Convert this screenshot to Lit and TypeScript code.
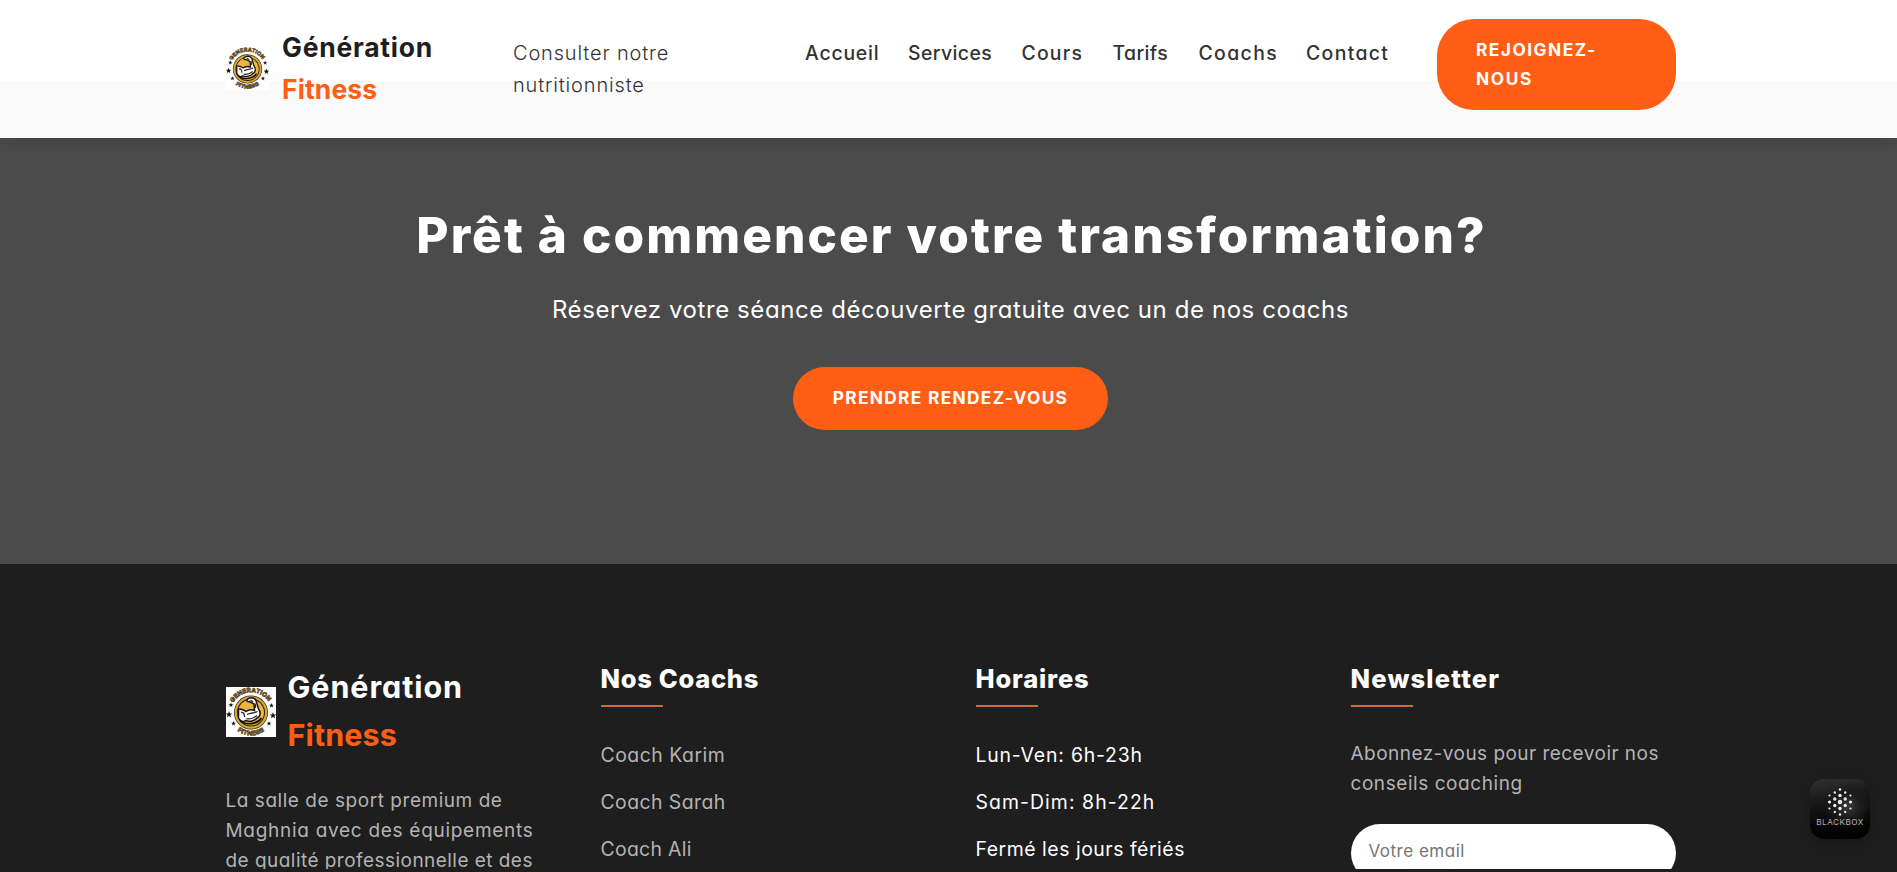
import { LitElement, html, css, svg } from "lit";

type Label = [text: string, spacing: number];

const NAV: Label[] = [["Accueil", 0.8], ["Services", 0.42], ["Cours", 1.2], ["Tarifs", 0.4], ["Coachs", 1.38], ["Contact", 1.35]];
const ABOUT: Label[] = [["La salle de sport premium de", 0.54], ["Maghnia avec des équipements", 0.71], ["de qualité professionnelle et des", 0.46]];
const COACHES: Label[] = [["Coach Karim", 0.52], ["Coach Sarah", 0.45], ["Coach Ali", 0.3]];
const HOURS: Label[] = [["Lun-Ven: 6h-23h", 0.82], ["Sam-Dim: 8h-22h", 1.07], ["Fermé les jours fériés", 0.54]];
const NEWS: Label[] = [["Abonnez-vous pour recevoir nos", 0.46], ["conseils coaching", 0.56]];

const STAR = "M0-3.4L1-1.1L3.4-1L1.5.5L2.1 2.9L0 1.5L-2.1 2.9L-1.5.5L-3.4-1L-1-1.1Z";
const STARS = [[5, 18, 0.7], [3, 27.5, 0.95], [7.5, 36.5, 0.7], [45.5, 18.5, 0.7], [47, 28.5, 0.95], [43, 36.5, 0.7]];

const line = ([text, spacing]: Label) =>
  html`<span class="line" style="letter-spacing:${spacing}px">${text}</span>`;

class GymLogo extends LitElement {
  static styles = css`
    :host { display: block; flex: none; }
    svg { display: block; width: 100%; height: 100%; }
    .arc { font: 800 6.2px Inter, sans-serif; fill: #b98526; stroke: #2a2010; stroke-width: 0.5px; }
  `;
  render() {
    return html`<svg viewBox="0 0 50 50">
      <rect width="50" height="50" fill="#fff" />
      <defs>
        <path id="top" d="M7.200 15.800A20.300 20.300 0 0 1 42.800 15.800" />
        <path id="low" d="M10.5 43.200A23 23 0 0 0 39.500 43.200" />
      </defs>
      <circle cx="25" cy="25.500" r="17" fill="#3a2a12" />
      <circle cx="25" cy="25.500" r="16.300" fill="#dca43a" />
      <circle cx="25" cy="25.500" r="14" fill="#2a1f12" />
      <circle cx="25" cy="25.500" r="13" fill="#eab541" />
      <path d="M12.5 22C16 21.5 18.500 23.5 20 24.500C23 22 27 22.500 28.500 23.500L28 17L23.500 14.500C20.500 15.500 20 12.500 22.500 11.500C25 10 29 11 30 13.500L32.500 22C35 25 34.500 30 31 31C29 34 23 35 19.500 33.500C17.500 35.500 14 34 12.500 31Z" fill="#fff" stroke="#171310" stroke-width="1.5" />
      <path d="M15 25.500C17.500 25 18.500 26.500 18.500 30M21 27.500C25 25.500 28 26.500 31.500 24.500M20.500 31.500C24 32.500 28 31 31 28.500M24.500 13L27 15M29.500 16.500V21" fill="none" stroke="#2c2c2e" stroke-width="1.3" />
      <path d="M14 33.500C18 38 31 38 35.500 31" fill="none" stroke="#171310" stroke-width="1.8" />
      ${STARS.map(([x, y, s]) => svg`<path d=${STAR} fill="#15151a" transform="translate(${x} ${y}) scale(${s})" />`)}
      <text class="arc"><textPath href="#top" textLength="42" lengthAdjust="spacingAndGlyphs">GENERATION</textPath></text>
      <text class="arc"><textPath href="#low" startOffset="1" textLength="29" lengthAdjust="spacingAndGlyphs">FITNESS</textPath></text>
    </svg>`;
  }
}
customElements.define("gym-logo", GymLogo);

/** Hexagonal cloud of dots, brighter and larger toward the centre column. */
const DOTS: number[][] = [];
[[0, [10.5, 16.5, 23, 29.5, 35.5]], [5.2, [13.5, 20, 26.5, 33]], [10.5, [16.5, 23, 29.5]]].forEach(([dx, ys]: any) =>
  ys.forEach((y: number) => {
    const r = Math.max(0.95, 2.2 - Math.abs(y - 23) * 0.075 - dx * 0.06);
    DOTS.push([30 + dx, y, r]);
    if (dx) DOTS.push([30 - dx, y, r]);
  })
);

class BlackboxBadge extends LitElement {
  static styles = css`
    :host {
      display: flex; flex-direction: column; align-items: center; width: 60px; height: 60px; overflow: hidden;
      border-radius: 14px; background: radial-gradient(ellipse at 62% 45%, #3a3a3a 0, #1c1c1c 26%, transparent 48%), linear-gradient(168deg, #333 0, #1a1a1a 32%, #070707 65%, #020202 100%);
      box-shadow: 0 3px 10px rgba(0, 0, 0, 0.25);
    }
    svg { display: block; width: 60px; height: 38px; flex: none; }
    .name { font: 400 8.2px/11px Inter, sans-serif; letter-spacing: 0.45px; color: #b0b0b0; }
  `;
  render() {
    return html`<svg viewBox="0 0 60 38">
        ${DOTS.map(([x, y, r]) => svg`<circle cx=${x} cy=${y} r=${r} fill="#eee" />`)}
      </svg><span class="name">BLACKBOX</span>`;
  }
}
customElements.define("blackbox-badge", BlackboxBadge);

class AppRoot extends LitElement {
  static styles = css`
    :host {
      display: flex; flex-direction: column; position: relative; height: 872px; overflow: hidden;
      background: #1e1e1e; color: #fff; font-family: Inter, sans-serif; font-feature-settings: "cv11";
    }
    h2, h3, p { margin: 0; }
    .line { display: block; white-space: nowrap; }
    .orange { color: #ff5e14; }

    .header {
      display: grid; grid-template-columns: 44px 231px 291px 645px 239px; flex: none; align-items: start;
      height: 138px; box-sizing: border-box; padding-left: 226px; position: relative; color: #333;
      background: linear-gradient(#fff 0 81px, #fafafa 81px); box-shadow: 0 3px 14px rgba(0, 0, 0, 0.12);
    }
    .header gym-logo { width: 43px; height: 43px; margin-top: 47px; }
    .brand { padding: 26px 0 0 12px; font: 700 26.5px/42px Inter, sans-serif; color: #1e1e1e; }
    .consult { padding: 37px 0 0 12px; font-size: 20px; line-height: 32px; font-weight: 300; letter-spacing: 0.84px; }
    .nav { display: grid; grid-template-columns: 103px 113.5px 91px 86px 107.5px auto; padding: 37px 0 0 13px; font-size: 19.4px; font-weight: 500; line-height: 32px; }
    .cta { border-radius: 37px; background: #ff5e14; color: #fff; font-weight: 700; font-size: 17.3px; }
    .join { box-sizing: border-box; height: 91px; margin-top: 19px; padding: 16px 0 0 39px; line-height: 29px; }

    .hero { display: flex; flex-direction: column; align-items: center; flex: none; height: 426px; box-sizing: border-box; padding: 67px 0 0 4px; background: #4b4b4b; }
    .hero h2, .footer h3 { font-feature-settings: normal; font-optical-sizing: none; font-weight: 800; }
    .hero h2 { font-size: 49.5px; line-height: 60px; letter-spacing: 2.08px; margin-right: -2.08px; white-space: nowrap; }
    .hero p { margin-top: 25.500px; font-size: 24px; line-height: 38px; letter-spacing: 0.58px; white-space: nowrap; }
    .book { margin-top: 38.500px; width: 315px; height: 63px; border-radius: 32px; line-height: 62px; text-align: center; letter-spacing: 1.33px; }

    .footer { display: grid; grid-template-columns: repeat(4, 325px); column-gap: 50px; flex: 1; min-height: 0; padding: 99px 0 0 225.5px; align-items: start; }
    .flogo { display: flex; align-items: center; gap: 12px; font-size: 30.5px; font-weight: 700; line-height: 48px; }
    .flogo gym-logo { width: 50px; height: 50px; margin-top: 2px; }
    .about { margin-top: 27px; font-size: 19px; line-height: 30px; color: #b3b3b3; }
    .footer h3 { font-size: 25.5px; line-height: 30px; padding: 1px 0 11px; }
    .rule { width: 62px; height: 2px; background: #cc6b42; }
    .list { padding-top: 24.500px; font-size: 19.4px; line-height: 47px; }
    .muted { color: #b3b3b3; }
    .news { padding-top: 32px; font-size: 19px; line-height: 30px; color: #b3b3b3; }
    .email { margin-top: 25px; box-sizing: border-box; width: 325px; height: 58px; border-radius: 29px; background: #fff; padding-left: 18px; color: #757575; font-size: 17px; line-height: 54px; letter-spacing: 0.5px; }

    .edge { position: absolute; left: 0; right: 0; bottom: 0; height: 3px; background: linear-gradient(90deg, #1f1d1d 0 18%, #281c1a 40% 58%, #1f1d1d 88%); }
    blackbox-badge { position: absolute; right: 27px; bottom: 33px; }
  `;

  render() {
    return html`
      <header class="header">
        <gym-logo></gym-logo>
        <div class="brand">${line(["Génération", 0.75])}<span class="orange">${line(["Fitness", 0.12])}</span></div>
        <div class="consult">Consulter notre<br />nutritionniste</div>
        <nav class="nav">${NAV.map(line)}</nav>
        <div class="cta join">${line(["REJOIGNEZ-", 1.5])}${line(["NOUS", 1.6])}</div>
      </header>
      <section class="hero">
        <h2>Prêt à commencer votre transformation?</h2>
        <p>Réservez votre séance découverte gratuite avec un de nos coachs</p>
        <div class="cta book">PRENDRE RENDEZ-VOUS</div>
      </section>
      <footer class="footer">
        <div>
          <div class="flogo"><gym-logo></gym-logo><div>${line(["Génération", 0.92])}<span class="orange">${line(["Fitness", 0.12])}</span></div></div>
          <p class="about">${ABOUT.map(line)}</p>
        </div>
        <div>
          <h3>${line(["Nos Coachs", 0.7])}</h3>
          <div class="rule"></div>
          <div class="list muted">${COACHES.map(line)}</div>
        </div>
        <div>
          <h3>${line(["Horaires", 0.85])}</h3>
          <div class="rule"></div>
          <div class="list">${HOURS.map(line)}</div>
        </div>
        <div>
          <h3>${line(["Newsletter", 1.17])}</h3>
          <div class="rule"></div>
          <p class="news">${NEWS.map(line)}</p>
          <div class="email">Votre email</div>
        </div>
      </footer>
      <div class="edge"></div>
      <blackbox-badge></blackbox-badge>
    `;
  }
}
customElements.define("app-root", AppRoot);
